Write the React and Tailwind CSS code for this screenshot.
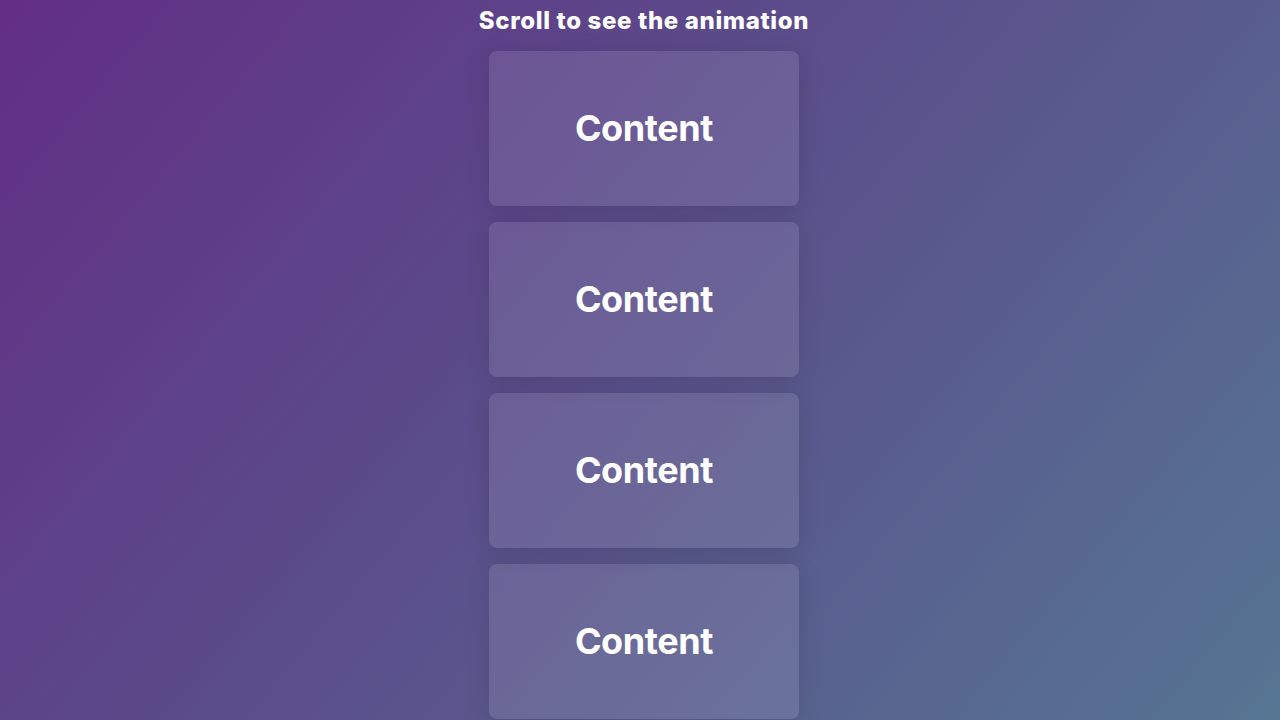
export default function App() {
  const cards = [0, 1, 2, 3];
  return (
    <div
      className="w-full h-[720px] overflow-hidden bg-[linear-gradient(130deg,#622e85_0%,#5b4a8a_40%,#567593_100%)] pl-[8px]"
      style={{ fontFamily: "Inter, 'Liberation Sans', sans-serif" }}
    >
      <div className="flex flex-col items-center">
        <h1 className="mt-[5px] h-[32px] leading-[32px] text-[24px] font-extrabold text-white tracking-[0.65px]">
          Scroll to see the animation
        </h1>
        <div className="mt-[14px] flex flex-col gap-4">
          {cards.map((i) => (
            <div
              key={i}
              className="w-[310px] h-[155px] rounded-lg bg-white/10 shadow-[0_4px_24px_rgba(0,0,0,0.12)] flex items-center justify-center"
            >
              <span className="text-[36px] font-bold text-white leading-none tracking-[-0.4px] -mt-[2px]">Content</span>
            </div>
          ))}
        </div>
      </div>
    </div>
  );
}
